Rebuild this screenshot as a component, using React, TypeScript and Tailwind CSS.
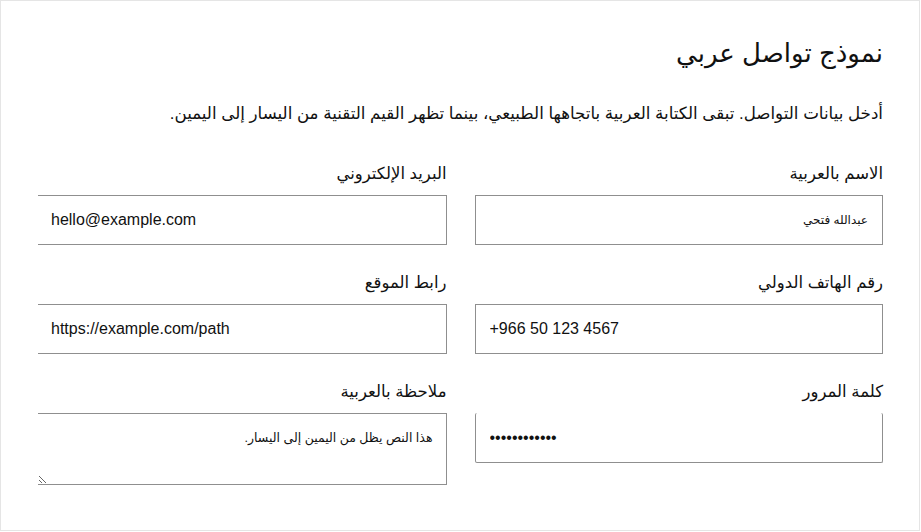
import React from "react";

export default function App() {
  return (
    <div className="w-[921px] h-[532px] bg-white overflow-hidden font-['Liberation_Sans','DejaVu_Sans',sans-serif] text-[#111]">
      <div dir="rtl" className="w-[920px] h-[531px] border border-[#e5e5e5] pt-[34px] pr-[36px] pl-[37px]">
        <h1 className="text-[26px] leading-[36px] font-normal">نموذج تواصل عربي</h1>
        <p className="mt-[31px] text-[16.7px] leading-[24px]">
          أدخل بيانات التواصل. تبقى الكتابة العربية باتجاهها الطبيعي، بينما تظهر القيم التقنية من اليسار إلى اليمين.
        </p>
        <div className="mt-[35px] grid grid-cols-2 gap-x-[28px] gap-y-[25px]">
          <div className="flex flex-col gap-[10px]">
            <label className="text-[16.5px] leading-[24px]">الاسم بالعربية</label>
            <input
              dir="rtl"
              defaultValue="عبدالله فتحي"
              className="h-[50px] border border-[#8f8f8f] px-[14px] text-[12px] outline-none"
            />
          </div>
          <div className="flex flex-col gap-[10px]">
            <label className="text-[16.5px] leading-[24px]">البريد الإلكتروني</label>
            <input
              dir="ltr"
              defaultValue="hello@example.com"
              className="h-[50px] border border-[#8f8f8f] border-l-0 px-[13px] text-[16px] outline-none"
            />
          </div>
          <div className="flex flex-col gap-[10px]">
            <label className="text-[16.5px] leading-[24px]">رقم الهاتف الدولي</label>
            <input
              dir="ltr"
              defaultValue="+966 50 123 4567"
              className="h-[50px] border border-[#8f8f8f] px-[14px] text-[16px] outline-none"
            />
          </div>
          <div className="flex flex-col gap-[10px]">
            <label className="text-[16.5px] leading-[24px]">رابط الموقع</label>
            <input
              dir="ltr"
              defaultValue="https://example.com/path"
              className="h-[50px] border border-[#8f8f8f] border-l-0 px-[13px] text-[16px] outline-none"
            />
          </div>
          <div className="flex flex-col gap-[10px] self-start">
            <label className="text-[16.5px] leading-[24px]">كلمة المرور</label>
            <input
              dir="ltr"
              type="password"
              defaultValue="secretpasswd"
              className="h-[50px] border border-[#8f8f8f] border-t-0 rounded-[2px] px-[14px] text-[16px] outline-none"
            />
          </div>
          <div className="flex flex-col gap-[10px]">
            <label className="text-[16.5px] leading-[24px]">ملاحظة بالعربية</label>
            <textarea
              dir="rtl"
              defaultValue="هذا النص يظل من اليمين إلى اليسار."
              className="h-[72px] border border-[#8f8f8f] border-l-0 pt-[15px] px-[13px] text-[12.5px] leading-[18px] outline-none resize-y"
            />
          </div>
        </div>
      </div>
    </div>
  );
}
